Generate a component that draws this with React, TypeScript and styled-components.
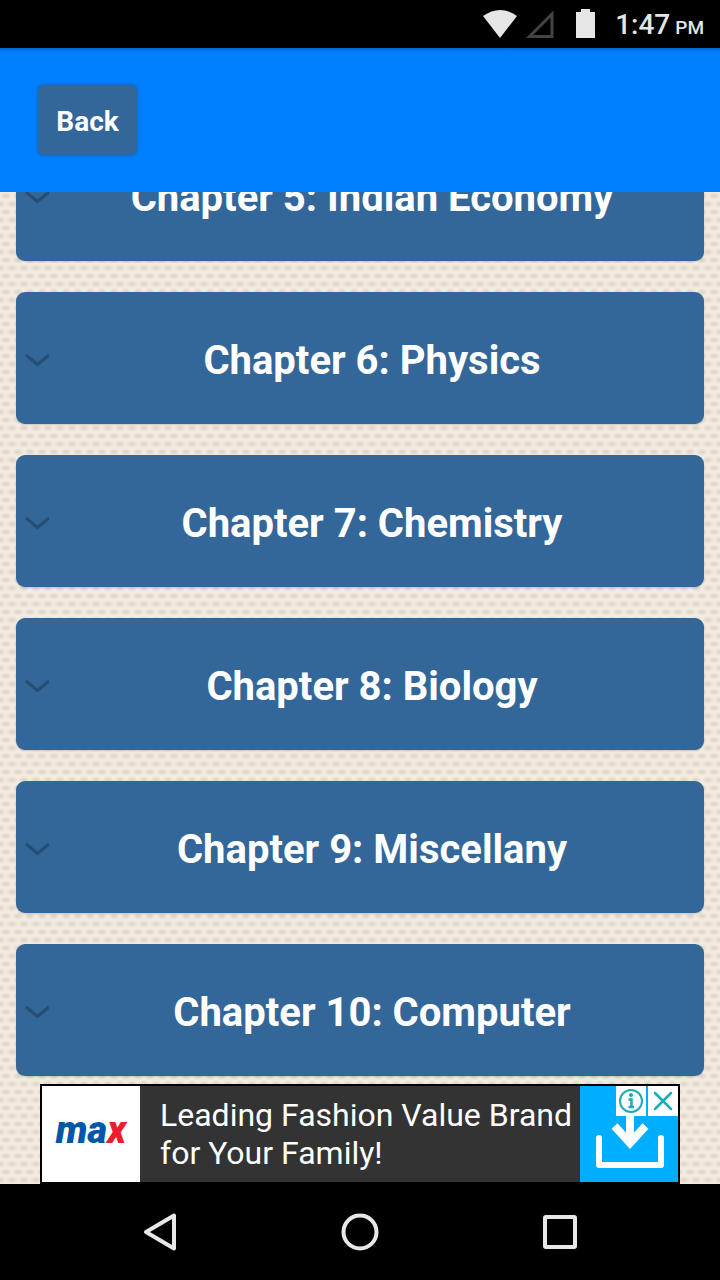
import React from 'react';
import styled, { createGlobalStyle } from 'styled-components';

const GlobalStyle = createGlobalStyle`
  * { box-sizing: border-box; }
  html, body { margin: 0; padding: 0; }
  body { font-family: Roboto, "Liberation Sans", sans-serif; background: #f0e9df; }
  button { font-family: inherit; border: 0; padding: 0; cursor: pointer; }
`;

const Screen = styled.div`
  display: flex;
  flex-direction: column;
  height: 100vh;
  overflow: hidden;
  background-color: #f3ece2;
  background-image:
    radial-gradient(ellipse 6px 4px at 6px 4px, rgba(150, 138, 122, 0.27), transparent),
    radial-gradient(ellipse 6px 4px at 0 12px, rgba(150, 138, 122, 0.27), transparent),
    radial-gradient(ellipse 6px 4px at 12px 12px, rgba(150, 138, 122, 0.27), transparent);
  background-size: 12px 16px;
`;

const StatusBar = styled.div`
  display: flex;
  flex: none;
  align-items: center;
  justify-content: flex-end;
  height: 48px;
  padding-right: 16px;
  background: #000;
  color: #e6e6e6;
`;

const StatusIcons = styled.svg`
  flex: none;
  width: 120px;
  height: 48px;
  margin-right: 12px;
`;

const Clock = styled.time`
  padding-top: 4px;
  font-size: 28px;
  line-height: 44px;
  font-weight: 500;
  white-space: nowrap;
`;

const Meridiem = styled.span`
  margin-left: 5px;
  font-size: 19px;
`;

const Header = styled.header`
  display: flex;
  flex: none;
  align-items: center;
  height: 144px;
  padding: 0 38px;
  background: linear-gradient(#0068cc, #007fff 4px);
`;

const BackButton = styled.button`
  width: 99px;
  height: 70px;
  padding-top: 4px;
  border-radius: 6px;
  background: #336699;
  box-shadow: 0 0 3px rgba(40, 80, 120, 0.9);
  color: #fff;
  font-size: 28px;
  line-height: 32px;
  font-weight: 700;
`;

const ChapterList = styled.main`
  display: flex;
  flex: 1;
  flex-direction: column;
  justify-content: flex-end;
  gap: 31px;
  min-height: 0;
  padding: 0 16px 8px;
  overflow: hidden;
`;

const ChapterButton = styled.button`
  display: flex;
  flex: none;
  align-items: center;
  height: 132px;
  padding: 6px 9px 0;
  border-radius: 9px;
  background: #336699;
  box-shadow: 0 1px 2px rgba(0, 0, 0, 0.15);
  color: #fff;
`;

const Chevron = styled.svg`
  flex: none;
  width: 24px;
  height: 24px;
`;

const ChapterTitle = styled.span`
  flex: 1;
  text-align: center;
  font-size: 40px;
  line-height: 48px;
  font-weight: 700;
`;

const AdBanner = styled.aside`
  display: flex;
  flex: none;
  align-self: center;
  width: calc(100% - 80px);
  height: 100px;
  border: 2px solid #000;
  background: #333;
`;

const AdLogo = styled.a`
  flex: none;
  width: 98px;
  height: 96px;
  background: #fff;
  color: #0057a8;
  font-size: 38px;
  font-style: italic;
  font-weight: 900;
  line-height: 88px;
  text-align: center;
  text-decoration: none;
`;

const LogoAccent = styled.span`
  color: #ee1c2e;
`;

const AdText = styled.a`
  flex: 1;
  padding: 10px 0 10px 20px;
  color: #fff;
  font-size: 32px;
  line-height: 38px;
  text-decoration: none;
  white-space: nowrap;
`;

const AdAction = styled.div`
  position: relative;
  flex: none;
  width: 98px;
  height: 96px;
  background: #00aeff;
`;

const DownloadButton = styled.button`
  display: block;
  width: 98px;
  height: 96px;
  background: transparent;
`;

const AdControls = styled.div`
  position: absolute;
  top: 0;
  right: 0;
  display: flex;
  gap: 2px;
`;

const AdControl = styled.button`
  width: 30px;
  height: 30px;
  background: #fff;
`;

const Drawing = styled.svg`
  display: block;
  width: 100%;
  height: 100%;
`;

const NavBar = styled.nav`
  display: flex;
  flex: none;
  align-items: center;
  justify-content: center;
  gap: 104px;
  height: 96px;
  background: #000;
`;

const NavButton = styled.button`
  width: 96px;
  height: 96px;
  background: transparent;
`;

const chapters = [
  'Chapter 5: Indian Economy',
  'Chapter 6: Physics',
  'Chapter 7: Chemistry',
  'Chapter 8: Biology',
  'Chapter 9: Miscellany',
  'Chapter 10: Computer',
];

export default function App() {
  return (
    <>
      <GlobalStyle />
      <Screen>
        <StatusBar>
          <StatusIcons viewBox="0 0 120 48" aria-hidden="true">
            <path d="M0 16Q17 4 34 16L17 38Z" fill="#e6e6e6" />
            <path d="M69 14V36.500H46.500Z" fill="none" stroke="#444" strokeWidth="3" />
            <path d="M98 9h9v3h5v26H93V12h5Z" fill="#e6e6e6" />
          </StatusIcons>
          <Clock>
            1:47<Meridiem>PM</Meridiem>
          </Clock>
        </StatusBar>
        <Header>
          <BackButton>Back</BackButton>
        </Header>
        <ChapterList>
          {chapters.map((title) => (
            <ChapterButton key={title}>
              <Chevron viewBox="0 0 24 24" aria-hidden="true">
                <path d="M1 6L12.500 15.500L24 6" fill="none" stroke="#264d73" strokeWidth="3" />
              </Chevron>
              <ChapterTitle>{title}</ChapterTitle>
            </ChapterButton>
          ))}
        </ChapterList>
        <AdBanner>
          <AdLogo href="#ad">
            ma<LogoAccent>x</LogoAccent>
          </AdLogo>
          <AdText href="#ad">
            Leading Fashion Value Brand
            <br />
            for Your Family!
          </AdText>
          <AdAction>
            <DownloadButton aria-label="Download">
              <Drawing viewBox="0 0 98 96">
                <path d="M19 52V79H81V52" fill="none" stroke="#fff" strokeWidth="6" strokeLinecap="round" strokeLinejoin="round" />
                <path d="M50 28V57M34.500 40L50 57L65.500 40" fill="none" stroke="#fff" strokeWidth="8" />
              </Drawing>
            </DownloadButton>
            <AdControls>
              <AdControl aria-label="Ad information">
                <Drawing viewBox="0 0 30 30" fill="none" stroke="#18adb8" strokeWidth="2">
                  <circle cx="15" cy="15" r="11" />
                  <path d="M12.500 13.500H15.500V21M12.500 21H18" strokeWidth="2.500" />
                  <circle cx="15" cy="9" r="2" fill="#18adb8" stroke="none" />
                </Drawing>
              </AdControl>
              <AdControl aria-label="Close ad">
                <Drawing viewBox="0 0 30 30">
                  <path d="M7 7L23 23M23 7L7 23" fill="none" stroke="#18adb8" strokeWidth="2.500" strokeLinecap="round" />
                </Drawing>
              </AdControl>
            </AdControls>
          </AdAction>
        </AdBanner>
        <NavBar>
          <NavButton aria-label="Go back">
            <Drawing viewBox="0 0 96 96">
              <path d="M62 31.500V64.500L34 48Z" fill="none" stroke="#e8e8e8" strokeWidth="4" strokeLinejoin="round" />
            </Drawing>
          </NavButton>
          <NavButton aria-label="Home">
            <Drawing viewBox="0 0 96 96">
              <circle cx="48" cy="48" r="16.500" fill="none" stroke="#e8e8e8" strokeWidth="4" />
            </Drawing>
          </NavButton>
          <NavButton aria-label="Recent apps">
            <Drawing viewBox="0 0 96 96">
              <rect x="33" y="33" width="30" height="30" rx="1" fill="none" stroke="#e8e8e8" strokeWidth="4" />
            </Drawing>
          </NavButton>
        </NavBar>
      </Screen>
    </>
  );
}
